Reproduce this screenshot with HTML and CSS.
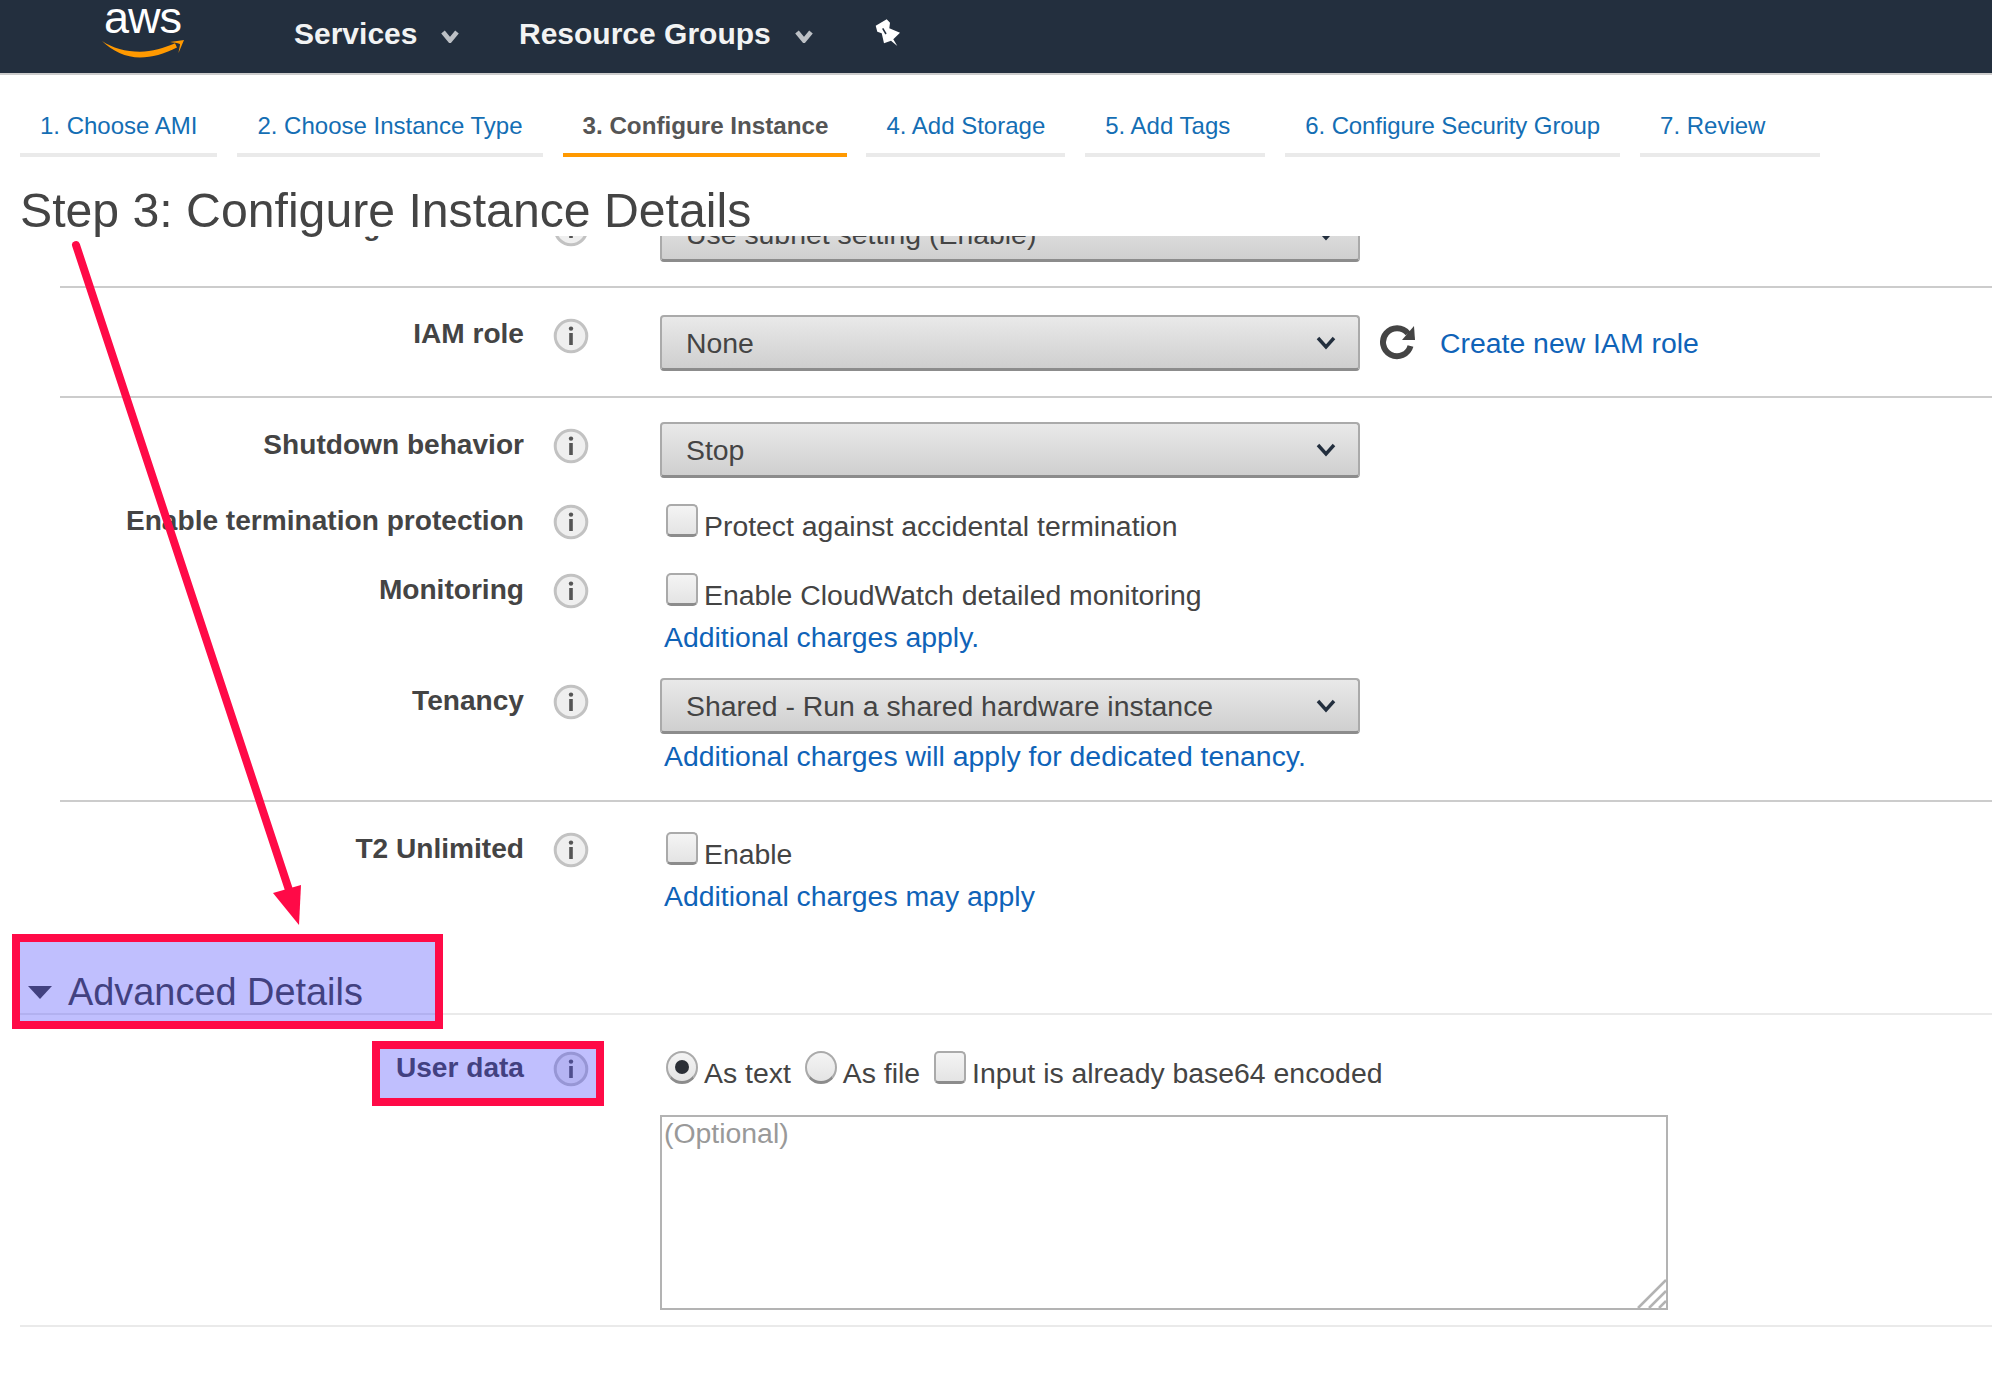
FILE: index.html
```html
<!DOCTYPE html>
<html lang="en">
<head>
<meta charset="utf-8">
<title>Step 3: Configure Instance Details</title>
<link rel="stylesheet" href="styles.css">
</head>
<body>
<svg class="defs" width="0" height="0" aria-hidden="true">
  <symbol id="info-icon" viewBox="0 0 36 36">
    <circle cx="18" cy="18" r="15.8" fill="#efefef" stroke="#c2c2c2" stroke-width="3"/>
    <circle cx="18" cy="10.6" r="2.2" fill="#555"/>
    <rect x="16.2" y="15" width="3.6" height="12" fill="#555"/>
  </symbol>
  <symbol id="chev-icon" viewBox="0 0 20 14">
    <path d="M2 2L10 11L18 2" fill="none" stroke="#232f3e" stroke-width="3.4"/>
  </symbol>
</svg>

<header class="topbar">
  <div class="logo">
    <span class="logo-text">aws</span>
    <svg class="logo-smile" width="82" height="18" viewBox="0 0 82 18"><path d="M0 1C10 8 24 11.7 38 11.7C50 11.7 62 8 73 3.3L75 7.5C62 14 50 17.5 38 17.5C24 17.5 10 11 0 1Z" fill="#f90"/><path d="M68 2L82 0L76.5 13C77 9 78 6 78 4C75 3 72 2.5 68 2Z" fill="#f90"/></svg>
  </div>
  <nav class="nav">
    <a class="nav-item nav-services">Services<svg class="caret" width="18" height="13" viewBox="0 0 18 13"><path d="M2 2L9 10.5L16 2" fill="none" stroke="#bcc0c5" stroke-width="4.6"/></svg></a>
    <a class="nav-item nav-groups">Resource Groups<svg class="caret" width="18" height="13" viewBox="0 0 18 13"><path d="M2 2L9 10.5L16 2" fill="none" stroke="#bcc0c5" stroke-width="4.6"/></svg></a>
    <svg class="pin" width="26" height="28" viewBox="0 0 26 28"><path d="M.7 6.7L11.7.3L15 3.7L14.3 9.3L25 13.7L18.3 20.3L22.3 27L16 21.7L9 24.3L6.7 14.3L2.3 12.7Z" fill="#fff"/><path d="M7.7 9.3L11 15" stroke="#232f3e" stroke-width="1.5"/></svg>
  </nav>
</header>

<ol class="tabs">
  <li class="tab">1. Choose AMI</li>
  <li class="tab">2. Choose Instance Type</li>
  <li class="tab tab-active">3. Configure Instance</li>
  <li class="tab">4. Add Storage</li>
  <li class="tab">5. Add Tags</li>
  <li class="tab tab-tight">6. Configure Security Group</li>
  <li class="tab">7. Review</li>
</ol>

<h1 class="title">Step 3: Configure Instance Details</h1>

<main class="scroller">
  <section class="group group-clipped">
    <div class="row row-select row-first">
      <label class="label">Auto-assign Public IP</label>
      <svg class="info"><use href="#info-icon"/></svg>
      <div class="control"><div class="select"><span>Use subnet setting (Enable)</span><svg class="chev"><use href="#chev-icon"/></svg></div></div>
    </div>
  </section>

  <section class="group group-iam">
    <div class="row row-select row-iam">
      <label class="label">IAM role</label>
      <svg class="info"><use href="#info-icon"/></svg>
      <div class="control control-inline">
        <div class="select"><span>None</span><svg class="chev"><use href="#chev-icon"/></svg></div>
        <svg class="refresh" width="38" height="36" viewBox="0 0 38 36"><path d="M28 8.5A14 14 0 1 0 30.5 21" fill="none" stroke="#444" stroke-width="6"/><path d="M22 15H35L34 1Z" fill="#444"/></svg>
        <a class="link">Create new IAM role</a>
      </div>
    </div>
  </section>

  <section class="group group-main">
    <div class="row row-select">
      <label class="label">Shutdown behavior</label>
      <svg class="info"><use href="#info-icon"/></svg>
      <div class="control"><div class="select"><span>Stop</span><svg class="chev"><use href="#chev-icon"/></svg></div></div>
    </div>
    <div class="row row-check row-term">
      <label class="label">Enable termination protection</label>
      <svg class="info"><use href="#info-icon"/></svg>
      <div class="control"><div class="opt"><input type="checkbox" class="check"><span>Protect against accidental termination</span></div></div>
    </div>
    <div class="row row-check row-mon">
      <label class="label">Monitoring</label>
      <svg class="info"><use href="#info-icon"/></svg>
      <div class="control">
        <div class="opt"><input type="checkbox" class="check"><span>Enable CloudWatch detailed monitoring</span></div>
        <a class="link link-block link-mon">Additional charges apply.</a>
      </div>
    </div>
    <div class="row row-select row-ten">
      <label class="label">Tenancy</label>
      <svg class="info"><use href="#info-icon"/></svg>
      <div class="control">
        <div class="select"><span>Shared - Run a shared hardware instance</span><svg class="chev"><use href="#chev-icon"/></svg></div>
        <a class="link link-block link-ten">Additional charges will apply for dedicated tenancy.</a>
      </div>
    </div>
  </section>

  <section class="group-t2">
    <div class="row row-check">
      <label class="label">T2 Unlimited</label>
      <svg class="info"><use href="#info-icon"/></svg>
      <div class="control">
        <div class="opt"><input type="checkbox" class="check"><span>Enable</span></div>
        <a class="link link-block link-mon">Additional charges may apply</a>
      </div>
    </div>
  </section>

  <section class="advanced">
    <h2 class="adv-title"><span class="tri"></span>Advanced Details</h2>
    <div class="row row-check row-user">
      <label class="label">User data</label>
      <svg class="info"><use href="#info-icon"/></svg>
      <div class="control">
        <div class="opts">
          <div class="opt"><input type="radio" name="ud" class="radio" checked><span>As text</span></div>
          <div class="opt"><input type="radio" name="ud" class="radio"><span>As file</span></div>
          <div class="opt"><input type="checkbox" class="check"><span>Input is already base64 encoded</span></div>
        </div>
        <div class="area-wrap">
          <textarea class="area" placeholder="(Optional)"></textarea>
          <svg class="grip" width="32" height="32" viewBox="0 0 32 32"><path d="M2 30L30 2M13 30L30 13M23 30L30 23" stroke="#b3b3b3" stroke-width="2.5" fill="none"/></svg>
        </div>
      </div>
    </div>
  </section>
</main>

<svg class="arrow" width="340" height="700" viewBox="0 236 340 700"><path d="M76 245L291 896" stroke="#ff0a47" stroke-width="8" stroke-linecap="round" fill="none"/><path d="M273 893L301 885L299 925Z" fill="#ff0a47"/></svg>
<div class="mark mark-adv"></div>
<div class="mark mark-user"></div>
</body>
</html>
```
FILE: styles.css
```css
* { box-sizing: border-box; }
html, body { margin: 0; padding: 0; }
body {
  position: relative;
  width: 1992px;
  height: 1388px;
  overflow: hidden;
  background: #fff;
  color: #444;
  font-family: "Liberation Sans", Arial, sans-serif;
}
.defs { position: absolute; }

/* top bar */
.topbar {
  display: flex;
  height: 75px;
  background: #232f3e;
  border-bottom: 2px solid #ccc;
  padding-left: 102px;
}
.logo { width: 86px; height: 73px; }
.logo-text {
  display: block;
  margin-left: 2px;
  color: #fff;
  font-size: 45px;
  line-height: 35px;
  letter-spacing: -1px;
}
.logo-smile { display: block; margin-top: 5px; overflow: visible; }
.nav { display: flex; align-items: center; margin-left: 106px; height: 68px; }
.nav-item { display: flex; align-items: center; color: #f2f3f3; font-size: 30px; font-weight: 700; white-space: nowrap; }
.caret { margin-left: 24px; margin-top: 4px; }
.nav-services { width: 225px; }
.nav-groups { width: 355px; }
.pin { margin-left: 1px; margin-top: -2px; }

/* wizard tabs */
.tabs {
  display: flex;
  gap: 20px;
  list-style: none;
  margin: 0;
  padding: 32px 0 0 20px;
}
.tab {
  min-width: 180px;
  padding: 0 20px 8px;
  border-bottom: 4px solid #eaeaea;
  color: #146eb4;
  font-size: 24px;
  line-height: 38px;
  white-space: nowrap;
}
.tab-active { margin-right: -1px; padding-right: 19px; color: #555; font-size: 24.2px; font-weight: 700; border-bottom-color: #f90; }
.tab-tight { letter-spacing: -.1px; }

.title {
  height: 79px;
  margin: 0;
  padding: 26px 0 0 20px;
  font-size: 48.2px;
  font-weight: 400;
  line-height: 54px;
  white-space: nowrap;
}

/* scrolling form */
.scroller { height: 1152px; overflow: hidden; }
.group-clipped { margin-top: -30px; margin-left: 60px; padding-bottom: 24px; border-bottom: 2px solid #ccc; }
.group-iam { margin-left: 60px; padding: 27px 0 25px; border-bottom: 2px solid #ccc; }
.group-main { margin-left: 60px; padding: 24px 0 28px; border-bottom: 2px solid #ccc; }
.group-t2 { margin-left: 60px; padding-top: 30px; }

.row {
  display: grid;
  grid-template-columns: 464px 36px 1fr;
  column-gap: 29px;
  align-items: start;
}
.control { margin-left: 42px; min-width: 0; }
.label {
  text-align: right;
  font-size: 28.1px;
  font-weight: 700;
  line-height: 32px;
  white-space: nowrap;
}
.info { display: block; width: 36px; height: 36px; }

.row-select .label { padding-top: 7px; }
.row-select .info { margin-top: 6px; }
.row-first .label { padding-top: 4px; }
.row-first .info { margin-top: 5px; }
.row-iam .label { padding-top: 3px; }
.row-iam .info { margin-top: 3px; }
.row-check .label { padding-top: 1px; }
.row-check .info { margin-top: 0; }
.row-term { margin-top: 26px; }
.row-mon { margin-top: 31px; }
.row-ten { margin-top: 25px; }

.select {
  display: flex;
  flex: none;
  align-items: center;
  justify-content: space-between;
  width: 700px;
  height: 56px;
  padding: 1px 22px 0 24px;
  border: 2px solid #aaa;
  border-bottom: 3px solid #8c8c8c;
  border-radius: 4px;
  background: linear-gradient(#e9e9e9, #cfcfcf);
  font-size: 28.4px;
}
.chev { width: 20px; height: 14px; }
.control-inline { display: flex; align-items: center; }
.refresh { flex: none; margin-left: 20px; margin-right: 22px; }

.link { color: #0f63b8; font-size: 28.4px; line-height: 32px; white-space: nowrap; }
.link-block { display: block; margin-left: 4px; }
.link-mon { margin-top: 10px; }
.link-ten { margin-top: 6px; }

.opt { display: flex; align-items: flex-start; font-size: 28.4px; line-height: 32px; }
.opt span { padding-top: 6px; margin-left: 6px; white-space: nowrap; }
.control > .opt { margin-left: 6px; }
.check, .radio {
  appearance: none;
  flex: none;
  margin: 0;
  width: 32px;
  height: 33px;
  background: linear-gradient(#f4f4f4, #e4e4e4);
  border: 2px solid #aaa;
  border-bottom: 3px solid #8c8c8c;
}
.check { border-radius: 5px; }
.radio { border-radius: 50%; position: relative; }
.radio:checked::after {
  content: "";
  position: absolute;
  left: 7px;
  top: 7px;
  width: 14px;
  height: 14px;
  border-radius: 50%;
  background: #2b2f36;
}

/* advanced details */
.advanced { margin-left: 20px; }
.adv-title {
  display: flex;
  align-items: center;
  height: 76px;
  margin: 27px 0 0;
  border-bottom: 2px solid #eaeaea;
  padding: 32px 0 0 8px;
  font-size: 37.9px;
  font-weight: 400;
  color: #444;
}
.tri {
  width: 0;
  height: 0;
  margin-right: 16px;
  border-left: 12px solid transparent;
  border-right: 12px solid transparent;
  border-top: 13px solid #444;
}
.row-user { margin: 36px 0 0 40px; padding-bottom: 15px; }
.opts { display: flex; gap: 14px; margin-left: 6px; }
.area-wrap { position: relative; width: 1008px; height: 195px; margin-top: 26px; }
.area {
  display: block;
  width: 100%;
  height: 100%;
  padding: 0 2px 2px;
  border: 2px solid #b3b3b3;
  border-radius: 0;
  outline: 0;
  resize: none;
  font-family: "Liberation Sans", sans-serif;
  font-size: 28.4px;
  line-height: 32px;
}
.area::placeholder { color: #999; opacity: 1; }
.grip { position: absolute; right: 0; bottom: 0; }
.advanced::after {
  content: "";
  display: block;
  height: 2px;
  background: #eaeaea;
}

/* annotation overlays */
.arrow { position: absolute; left: 0; top: 236px; }
.mark { position: absolute; border: 8px solid #ff0a47; background: rgba(64, 62, 251, .33); }
.mark-adv { left: 12px; top: 934px; width: 431px; height: 95px; }
.mark-user { left: 372px; top: 1041px; width: 232px; height: 65px; }
```
